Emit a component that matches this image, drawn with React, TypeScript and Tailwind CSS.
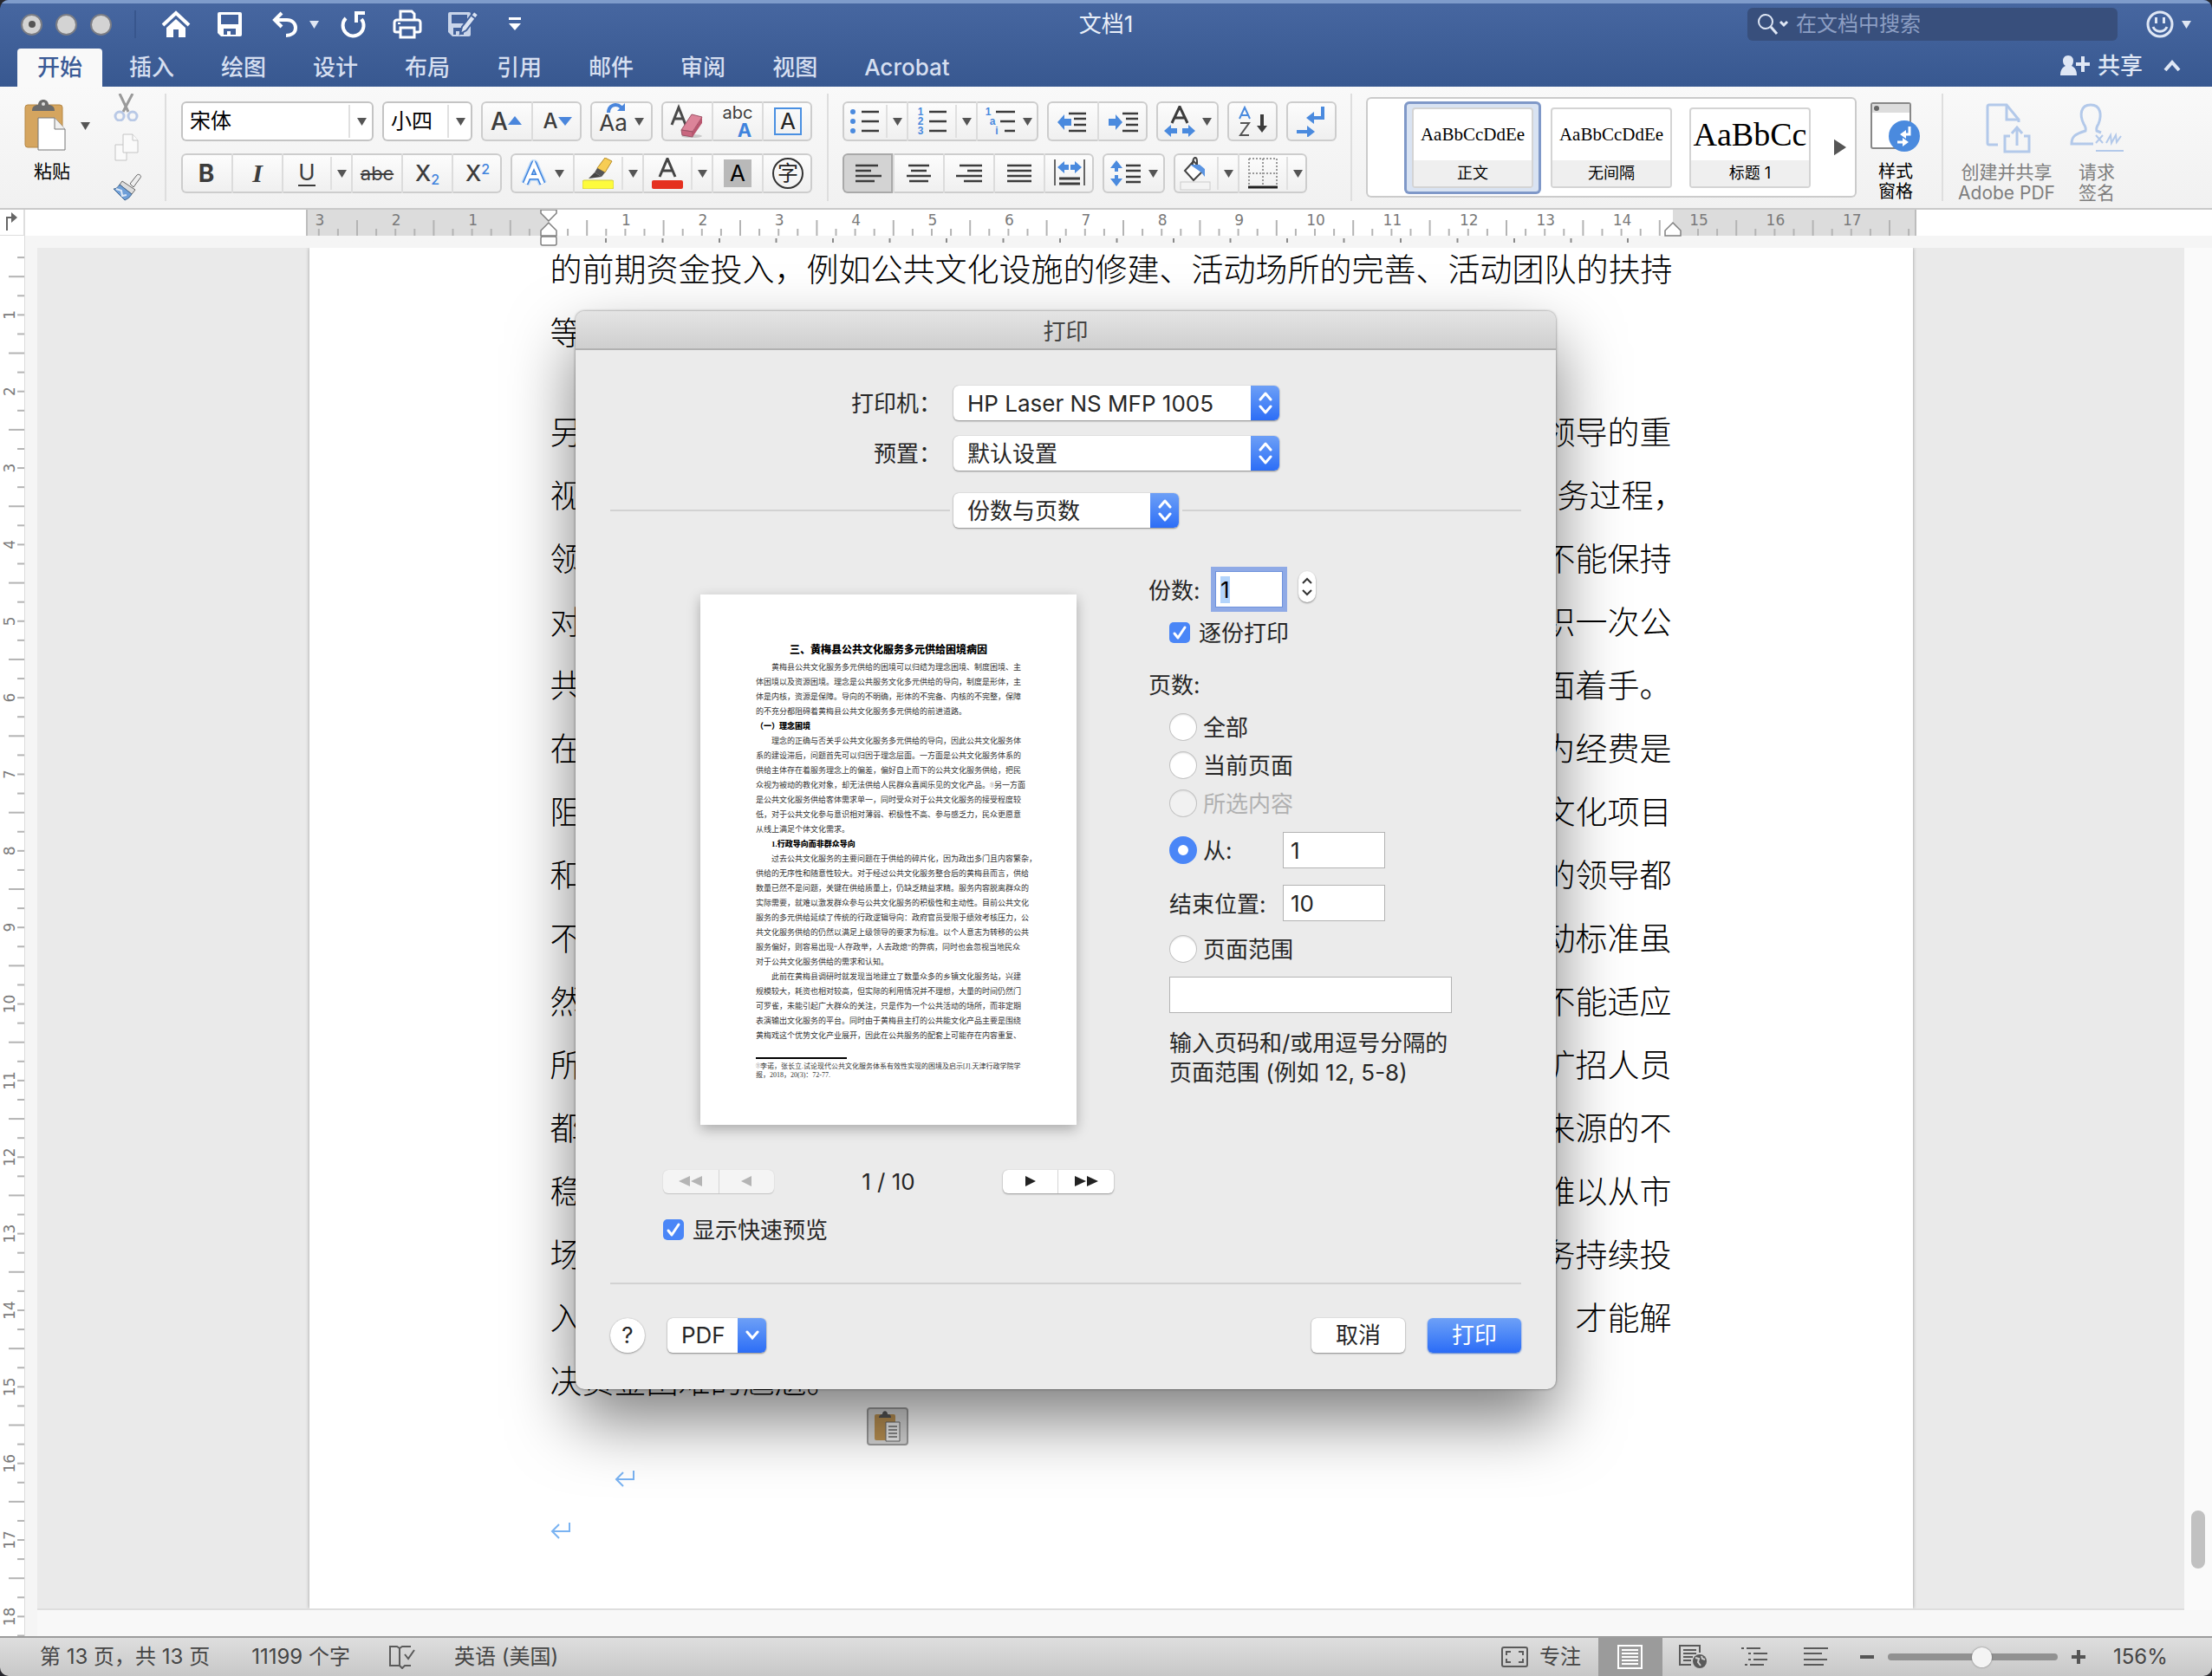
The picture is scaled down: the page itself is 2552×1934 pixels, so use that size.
import { useState } from 'react';
import type { ReactNode } from 'react';
import clsx from 'clsx';

const TABS = ['开始', '插入', '绘图', '设计', '布局', '引用', '邮件', '审阅', '视图', 'Acrobat'];

interface DocLine {
  head: string;
  tail?: string;
  /** closing punctuation hangs over the right margin */
  hanging?: boolean;
}

const BODY_LINES: DocLine[] = [
  { head: '另', tail: '领导的重' },
  { head: '视', tail: '业务过程，', hanging: true },
  { head: '领', tail: '不能保持' },
  { head: '对', tail: '织一次公' },
  { head: '共', tail: '面着手。' },
  { head: '在', tail: '为经费是' },
  { head: '阻', tail: '文化项目' },
  { head: '和', tail: '的领导都' },
  { head: '不', tail: '动标准虽' },
  { head: '然', tail: '不能适应' },
  { head: '所', tail: '扩招人员' },
  { head: '都', tail: '来源的不' },
  { head: '稳', tail: '难以从市' },
  { head: '场', tail: '务持续投' },
  { head: '入', tail: '才能解' },
  { head: '决资金困难的尴尬。' },
];

interface PreviewLine {
  text: string;
  kind?: 'indent' | 'heading' | 'subheading';
}

const PREVIEW_LINES: PreviewLine[] = [
  { text: '黄梅县公共文化服务多元供给的困境可以归结为理念困境、制度困境、主', kind: 'indent' },
  { text: '体困境以及资源困境。理念是公共服务文化多元供给的导向，制度是形体，主' },
  { text: '体是内核，资源是保障。导向的不明确，形体的不完备、内核的不完整，保障' },
  { text: '的不充分都阻碍着黄梅县公共文化服务多元供给的前进道路。' },
  { text: '（一）理念困境', kind: 'heading' },
  { text: '理念的正确与否关乎公共文化服务多元供给的导向，因此公共文化服务体', kind: 'indent' },
  { text: '系的建设滞后，问题首先可以归因于理念层面。一方面是公共文化服务体系的' },
  { text: '供给主体存在着服务理念上的偏差，偏好自上而下的公共文化服务供给，把民' },
  { text: '众视为被动的教化对象，却无法供给人民群众喜闻乐见的文化产品。①另一方面' },
  { text: '是公共文化服务供给客体需求单一，同时受众对于公共文化服务的接受程度较' },
  { text: '低，对于公共文化参与意识相对薄弱、积极性不高、参与感乏力，民众更愿意' },
  { text: '从线上满足个体文化需求。' },
  { text: '1.行政导向而非群众导向', kind: 'subheading' },
  { text: '过去公共文化服务的主要问题在于供给的碎片化，因为政出多门且内容繁杂，', kind: 'indent' },
  { text: '供给的无序性和随意性较大。对于经过公共文化服务整合后的黄梅县而言，供给' },
  { text: '数量已然不是问题，关键在供给质量上，仍缺乏精益求精。服务内容脱离群众的' },
  { text: '实际需要，就难以激发群众参与公共文化服务的积极性和主动性。目前公共文化' },
  { text: '服务的多元供给延续了传统的行政逻辑导向：政府官员受限于绩效考核压力，公' },
  { text: '共文化服务供给的仍然以满足上级领导的要求为标准。以个人意志为转移的公共' },
  { text: '服务偏好，则容易出现“人存政举，人去政熄”的弊病，同时也会忽视当地民众' },
  { text: '对于公共文化服务供给的需求和认知。' },
  { text: '此前在黄梅县调研时就发现当地建立了数量众多的乡镇文化服务站，兴建', kind: 'indent' },
  { text: '规模较大，耗资也相对较高，但实际的利用情况并不理想，大量的时间仍然门' },
  { text: '可罗雀，未能引起广大群众的关注，只是作为一个公共活动的场所，而非定期' },
  { text: '表演输出文化服务的平台。同时由于黄梅县主打的公共能文化产品主要是围绕' },
  { text: '黄梅戏这个优势文化产业展开，因此在公共服务的配套上可能存在内容重复、' },
];

/* ---------- small shared pieces ---------- */

function Caret({ className = 'text-[#555]' }: { className?: string }) {
  return (
    <svg className={clsx('h-[9px] w-[11px] shrink-0', className)} viewBox="0 0 11 9" fill="currentColor">
      <path d="M0 0h11L5.5 9z" />
    </svg>
  );
}

function Group({ children }: { children: ReactNode }) {
  return (
    <div className="flex h-[46px] shrink-0 overflow-hidden rounded-md bg-gradient-to-b from-[#fdfdfd] to-[#efefef] shadow-[inset_0_0_0_2px_#cdcdcd]">
      {children}
    </div>
  );
}

interface CellProps {
  label: string;
  width?: string;
  first?: boolean;
  active?: boolean;
  children: ReactNode;
}

function Cell({ label, width = 'w-[58px]', first, active, children }: CellProps) {
  return (
    <button
      type="button"
      aria-label={label}
      className={clsx(
        'flex h-full shrink-0 items-center justify-center gap-2 text-[#3c3c3c]',
        width,
        !first && 'border-l-2 border-[#dcdcdc]',
        active && 'rounded-l-md bg-[#d3d3d3] shadow-[inset_0_0_0_2px_#a9a9a9]',
      )}
    >
      {children}
    </button>
  );
}

function DropCell({ label, width = 'w-6' }: { label: string; width?: string }) {
  return (
    <button type="button" aria-label={label} className={clsx('flex h-full shrink-0 items-center py-1', width)}>
      <span className="flex h-full w-full items-center justify-center border-l-2 border-[#e0e0e0]">
        <Caret />
      </span>
    </button>
  );
}

function Divider() {
  return <div className="mt-2 h-[124px] w-0.5 shrink-0 bg-[#dedede]" />;
}

/* ---------- title bar ---------- */

function TitleBar() {
  return (
    <div className="grid h-[52px] grid-cols-[1fr_auto_1fr] items-center border-t-4 border-[#7f9ccb] text-white">
      <div className="flex items-center">
        <div className="ml-6 flex gap-[15px]">
          <span className="flex size-[25px] items-center justify-center rounded-full border-2 border-[#7b7d84] bg-[#d3d3d3]">
            <span className="size-2 rounded-full bg-[#555]" />
          </span>
          <span className="size-[25px] rounded-full border-2 border-[#7b7d84] bg-[#d3d3d3]" />
          <span className="size-[25px] rounded-full border-2 border-[#7b7d84] bg-[#d3d3d3]" />
        </div>
        <div className="ml-[26px] h-8 w-0.5 bg-[#38568d]" />
        <div className="ml-7 flex items-center">
          <button type="button" aria-label="主页">
            <svg className="h-8 w-9" viewBox="0 0 36 32" fill="none" stroke="#fff">
              <path d="M3 17L18 3l15 14" strokeWidth="4" />
              <path d="M7 20L18 10l11 10v11h-8v-9h-6v9H7z" fill="#fff" stroke="none" />
            </svg>
          </button>
          <button type="button" aria-label="保存" className="ml-7">
            <svg className="size-8" viewBox="0 0 32 32">
              <path d="M4 2h24a2 2 0 012 2v24a2 2 0 01-2 2H6l-4-4V4a2 2 0 012-2z" fill="#fff" />
              <path d="M6 5h20v11H6zM9 21h14v7h-6v-4h-4v4H9z" fill="#42619b" />
            </svg>
          </button>
          <button type="button" aria-label="撤消" className="ml-8 flex items-center gap-3">
            <svg className="h-8 w-8" viewBox="0 0 32 32" fill="none" stroke="#fff" strokeWidth="4">
              <path d="M12 3L4 11l8 8" />
              <path d="M4 11h14c6 0 10 4 10 9 0 6-5 9-11 9" />
            </svg>
            <Caret className="text-[#dfe6f3]" />
          </button>
          <button type="button" aria-label="重复" className="ml-6">
            <svg className="size-8" viewBox="0 0 32 32" fill="none" stroke="#fff" strokeWidth="4">
              <path d="M7 9a12 12 0 1018 1" />
              <path d="M29 3H19v11" />
            </svg>
          </button>
          <button type="button" aria-label="打印" className="ml-7">
            <svg className="h-9 w-9" viewBox="0 0 36 36" fill="none" stroke="#fff" strokeWidth="3">
              <path d="M10 13V3h13l3 3v7" />
              <path d="M9 27H5a2 2 0 01-2-2v-9a3 3 0 013-3h24a3 3 0 013 3v9a2 2 0 01-2 2h-4" />
              <path d="M10 22h16v11H10z" />
              <path d="M7 17h3" strokeWidth="2" />
            </svg>
          </button>
          <button type="button" aria-label="另存" className="ml-[26px]">
            <svg className="h-9 w-10" viewBox="0 0 40 36">
              <path d="M5 4h22a2 2 0 012 2v24a2 2 0 01-2 2H8l-5-5V6a2 2 0 012-2z" fill="#c9d5ea" />
              <path d="M7 7h18v10H7zM9 22h12v8h-5v-4h-4v4H9z" fill="#42619b" />
              <path d="M33 3l5 4-14 18-7 4 2-8z" fill="#dbe4f3" stroke="#42619b" strokeWidth="2" />
              <path d="M30 8l5 4" stroke="#42619b" strokeWidth="2" />
            </svg>
          </button>
          <button type="button" aria-label="自定义工具栏" className="ml-8">
            <svg className="h-4 w-4" viewBox="0 0 16 16" fill="#fff">
              <path d="M1 0h14v3H1zM1 7h14l-7 8z" />
            </svg>
          </button>
        </div>
      </div>
      <h1 className="text-[26px] leading-8 text-[#e8eef8]">文档1</h1>
      <div className="flex items-center justify-end pr-6">
        <div className="flex h-[38px] w-[427px] items-center rounded-md bg-[#384f7c] pl-3">
          <svg className="h-7 w-9 shrink-0" viewBox="0 0 36 28" fill="none" stroke="#dfe7f5" strokeWidth="2">
            <circle cx="9" cy="11" r="8" />
            <path d="M15 17l7 8" strokeWidth="3" />
            <path d="M26 11l4 4 4-4" strokeWidth="3" />
          </svg>
          <input
            type="search"
            aria-label="在文档中搜索"
            placeholder="在文档中搜索"
            className="ml-2 w-full bg-transparent text-2xl leading-8 outline-none placeholder:text-[#8c9ec3]"
          />
        </div>
        <button type="button" aria-label="反馈" className="ml-8 flex items-center gap-2">
          <svg className="size-[34px]" viewBox="0 0 34 34" fill="none" stroke="#dfe7f5" strokeWidth="3">
            <circle cx="17" cy="17" r="14" />
            <path d="M12.500 9v7M21.500 9v7" />
            <path d="M9 20c3 7 13 7 16 0" />
          </svg>
          <Caret className="text-[#dfe6f3]" />
        </button>
      </div>
    </div>
  );
}

function TabBar() {
  const [tab, setTab] = useState('开始');
  return (
    <div className="flex h-12 items-end justify-between">
      <nav className="ml-5 flex gap-2">
        {TABS.map((t) => (
          <button
            key={t}
            type="button"
            onClick={() => setTab(t)}
            className={clsx(
              'h-11 rounded-t px-[23px] text-[26px] leading-[42px] font-medium',
              t === tab ? 'bg-[#f9f9f9] text-[#3a5a96]' : 'text-[#d6dff0]',
            )}
          >
            {t}
          </button>
        ))}
      </nav>
      <div className="flex h-11 items-center pr-9 pb-1 text-[#dfe7f5]">
        <button type="button" className="flex items-center gap-2 text-[26px] leading-8 font-medium">
          <svg className="h-7 w-9" viewBox="0 0 36 28" fill="currentColor">
            <path d="M10 2c4 0 6 3 6 6s-1 5-2 6c4 2 6 5 6 11H1c0-6 2-9 6-11-2-1-3-3-3-6s2-6 6-6z" />
            <path d="M25 3h4v7h6v4h-6v7h-4v-7h-6v-4h6z" />
          </svg>
          共享
        </button>
        <button type="button" aria-label="折叠功能区" className="ml-6">
          <svg className="h-4 w-5" viewBox="0 0 20 16" fill="none" stroke="currentColor" strokeWidth="4">
            <path d="M2 13l8-9 8 9" />
          </svg>
        </button>
      </div>
    </div>
  );
}

/* ---------- ribbon ---------- */

function ClipboardSection() {
  return (
    <div className="flex w-[190px] shrink-0 pl-[27px]">
      <div className="w-[66px] pt-[14px]">
        <button type="button" className="flex flex-col gap-2.5 text-[21px] leading-7 text-black">
          <svg className="h-[60px] w-[50px]" viewBox="0 0 48 60">
            <rect x="1" y="7" width="43" height="49" rx="3" fill="#d5a55f" stroke="#b58745" />
            <path d="M9 14c0-5 3-7 7-7 0-4 3-6 6-6s6 2 6 6c4 0 7 2 7 7z" fill="#6b6b6b" />
            <circle cx="22" cy="6" r="2" fill="#ddd" />
            <path d="M16 22h19l12 13v24H16z" fill="#fff" stroke="#777" />
            <path d="M35 22v13h12" fill="#f0f0f0" stroke="#777" />
          </svg>
          <span className="pl-3 whitespace-nowrap">粘贴</span>
        </button>
      </div>
      <button type="button" aria-label="粘贴选项" className="h-[90px]">
        <Caret />
      </button>
      <div className="ml-6 flex flex-col items-center pt-2">
        <button type="button" aria-label="剪切">
          <svg className="h-8 w-8" viewBox="0 0 32 32" fill="none">
            <path d="M8 0l10 21M23 0L12 21" stroke="#9a9a9a" strokeWidth="3" />
            <circle cx="8" cy="26" r="5" stroke="#b9c9e6" strokeWidth="3" />
            <circle cx="23" cy="26" r="5" stroke="#b9c9e6" strokeWidth="3" />
          </svg>
        </button>
        <button type="button" aria-label="复制" className="mt-[14px]">
          <svg className="h-8 w-8" viewBox="0 0 32 32" fill="#fafafa" stroke="#c4c4c4">
            <path d="M3 13h13v18H3z" />
            <path d="M12 1h11l6 7v14H12z" />
            <path d="M23 1v7h6" />
          </svg>
        </button>
        <button type="button" aria-label="格式刷" className="mt-[14px]">
          <svg className="h-8 w-9" viewBox="0 0 36 32">
            <path d="M22 12L30 2c2-2 6 1 4 3l-8 11z" fill="#eee" stroke="#666" />
            <path d="M13 9l15 10-4 5L10 13z" fill="#ddd" stroke="#666" />
            <path d="M10 13l14 11c-2 4-6 6-8 7L3 18c3 0 5-2 7-5z" fill="#6f9fd8" stroke="#44688f" />
            <path d="M6 18l6 2 1 6 5-1" stroke="#dfeaf7" strokeWidth="2" fill="none" />
          </svg>
        </button>
      </div>
    </div>
  );
}

function ComboBox({ label, value, width }: { label: string; value: string; width: string }) {
  return (
    <div
      className={clsx(
        'flex h-[46px] shrink-0 rounded-md bg-white pl-2.5 shadow-[inset_0_0_0_2px_#c4c4c4]',
        width,
      )}
    >
      <input
        aria-label={label}
        defaultValue={value}
        className="w-full min-w-0 bg-transparent text-2xl leading-8 text-black outline-none"
      />
      <DropCell label={`${label}列表`} width="w-[28px] shrink-0 mr-px" />
    </div>
  );
}

function FontSection() {
  return (
    <div className="mx-[17px] mt-[17px] flex shrink-0 flex-col gap-[14px]">
      <div className="flex gap-2.5">
        <ComboBox label="字体" value="宋体" width="w-[222px]" />
        <ComboBox label="字号" value="小四" width="w-[104px]" />
        <Group>
          <Cell label="增大字号" first>
            <span className="text-[28px] leading-8 font-medium">A</span>
            <svg className="-ml-2 h-3 w-4" viewBox="0 0 16 12" fill="#4a86dc">
              <path d="M0 10L8 0l8 10z" />
            </svg>
          </Cell>
          <Cell label="减小字号">
            <span className="text-2xl leading-8 font-medium">A</span>
            <svg className="-ml-2 h-3 w-4" viewBox="0 0 16 12" fill="#4a86dc">
              <path d="M0 1l8 10 8-10z" />
            </svg>
          </Cell>
        </Group>
        <Group>
          <Cell label="更改大小写" width="w-[72px]" first>
            <span className="relative pt-1 text-[26px] leading-8">
              Aa
              <svg className="absolute -top-1 left-2 h-3.5 w-6" viewBox="0 0 24 14" fill="none">
                <path d="M3 12C3 4 11 0 18 6" stroke="#4a86dc" strokeWidth="4" />
                <path d="M13 10h9V1z" fill="#4a86dc" />
              </svg>
            </span>
            <Caret />
          </Cell>
        </Group>
        <Group>
          <Cell label="清除格式" first>
            <svg className="size-10" viewBox="0 0 40 40">
              <path d="M3 24L11 4l8 20M6 17h10" fill="none" stroke="#4a4a4a" strokeWidth="3" />
              <ellipse cx="26" cy="37" rx="12" ry="2" fill="#c9c9c9" />
              <path d="M26 12l12 3-11 17-13-2z" fill="#dc8499" stroke="#9c5266" />
              <path d="M14 30l13 2v6l-12-2z" fill="#c9677f" stroke="#9c5266" />
              <path d="M38 15v7L27 38v-6z" fill="#b9566f" />
            </svg>
          </Cell>
          <Cell label="拼音指南">
            <span className="flex flex-col text-xl leading-5">
              <span>abc</span>
              <span className="pl-4 text-[22px] font-bold text-[#3f83dd]">A</span>
            </span>
          </Cell>
          <Cell label="字符边框">
            <span className="flex h-8 w-8 items-center justify-center border-2 border-[#4a90e2] text-[26px] leading-8 text-[#222]">
              A
            </span>
          </Cell>
        </Group>
      </div>
      <div className="flex gap-2.5">
        <Group>
          <Cell label="加粗" first>
            <span className="text-[28px] leading-8 font-bold">B</span>
          </Cell>
          <Cell label="倾斜">
            <span className="font-['Liberation_Serif',serif] text-[30px] leading-8 font-bold italic">I</span>
          </Cell>
          <Cell label="下划线" width="w-[56px]">
            <span className="border-b-2 border-[#3c3c3c] text-[26px] leading-7">U</span>
          </Cell>
          <DropCell label="下划线选项" />
          <Cell label="删除线">
            <span className="text-[22px] leading-8 line-through decoration-2">abc</span>
          </Cell>
          <Cell label="下标">
            <span className="text-[26px] leading-8 font-medium">
              X<sub className="text-base text-[#3f83dd]">2</sub>
            </span>
          </Cell>
          <Cell label="上标">
            <span className="text-[26px] leading-8 font-medium">
              X<sup className="text-base text-[#3f83dd]">2</sup>
            </span>
          </Cell>
        </Group>
        <Group>
          <Cell label="文本效果" width="w-[72px]" first>
            <svg className="h-9 w-8" viewBox="0 0 32 36" fill="none">
              <path d="M6 30L16 7l10 23M10 22h12" stroke="#bcd9f8" strokeWidth="10" strokeLinejoin="round" />
              <path d="M6 30L16 7l10 23M10 22h12" stroke="#3f83dd" strokeWidth="7" strokeLinejoin="round" />
              <path d="M6 30L16 7l10 23M10 22h12" stroke="#fff" strokeWidth="4" />
            </svg>
            <Caret />
          </Cell>
          <Cell label="突出显示" width="w-[56px]">
            <svg className="h-9 w-9" viewBox="0 0 36 36">
              <path d="M17 12L26 0l8 4-8 13z" fill="#f7cd55" stroke="#b58d2b" />
              <path d="M17 12l9 5-4 5-8-5z" fill="#555" />
              <path d="M14 17l8 5-15 2z" fill="#444" />
              <rect x="0" y="26" width="36" height="10" rx="2" fill="#fdfb3c" stroke="#cfcb3c" />
            </svg>
          </Cell>
          <DropCell label="突出显示颜色" />
          <Cell label="字体颜色" width="w-[56px]">
            <svg className="h-9 w-9" viewBox="0 0 36 36">
              <path d="M9 22L18 1l9 21M12 15h12" fill="none" stroke="#444" strokeWidth="3" />
              <rect x="0" y="26" width="36" height="10" rx="2" fill="#e5301f" />
            </svg>
          </Cell>
          <DropCell label="字体颜色选项" />
          <Cell label="字符底纹">
            <span className="flex h-8 w-8 items-center justify-center bg-[#b9b9b9] text-[26px] leading-8 text-black">
              A
            </span>
          </Cell>
          <Cell label="带圈字符">
            <span className="flex size-9 items-center justify-center rounded-full border-2 border-[#333] text-2xl leading-8 text-[#222]">
              字
            </span>
          </Cell>
        </Group>
      </div>
    </div>
  );
}

function LinesIcon({ rows }: { rows: [number, number][] }) {
  return (
    <svg className="h-9 w-9" viewBox="0 0 36 36" stroke="#3c3c3c" strokeWidth="2.500">
      {rows.map(([x1, x2], i) => (
        <path key={i} d={`M${x1} ${9 + i * 6}H${x2}`} />
      ))}
    </svg>
  );
}

function ListIcon({ marks, dots, indent }: { marks?: string[]; dots?: boolean; indent?: boolean }) {
  return (
    <svg className="h-9 w-9 shrink-0" viewBox="0 0 36 36">
      {[7, 18, 29].map((y, i) => (
        <g key={y}>
          {dots && <circle cx="5" cy={y} r="3" fill="#4a8ade" />}
          {marks && (
            <text
              x={indent ? 4 + i * 5 : 5}
              y={y + 4}
              textAnchor="middle"
              fontSize="12"
              fontWeight="700"
              fill="#4a8ade"
              fontFamily="Liberation Sans, sans-serif"
            >
              {marks[i]}
            </text>
          )}
          <path d={`M${indent ? 13 + i * 5 : 15} ${y}H35`} stroke="#3c3c3c" strokeWidth="2.500" />
        </g>
      ))}
    </svg>
  );
}

function IndentIcon({ right }: { right?: boolean }) {
  return (
    <svg className="h-9 w-9" viewBox="0 0 36 36">
      <path
        d={right ? 'M17 19L9 10v5H1v8h8v5z' : 'M1 19l8-9v5h8v8H9v5z'}
        fill="#4a8ade"
      />
      <path
        d={right ? 'M17 9h18M21 15h14M21 22h14M17 29h18' : 'M14 9h20M20 15h14M20 22h14M14 29h20'}
        stroke="#3c3c3c"
        strokeWidth="2.500"
      />
    </svg>
  );
}

function ParagraphSection() {
  return (
    <div className="mx-4 mt-[17px] flex shrink-0 flex-col gap-[14px]">
      <div className="flex gap-2.5">
        <Group>
          <Cell label="项目符号" width="w-[50px]" first>
            <ListIcon dots />
          </Cell>
          <DropCell label="项目符号选项" />
          <Cell label="编号" width="w-[56px]">
            <ListIcon marks={['1', '2', '3']} />
          </Cell>
          <DropCell label="编号选项" />
          <Cell label="多级列表" width="w-[72px]">
            <ListIcon marks={['1', 'a', 'i']} indent />
            <Caret />
          </Cell>
        </Group>
        <Group>
          <Cell label="减少缩进量" first>
            <IndentIcon />
          </Cell>
          <Cell label="增加缩进量">
            <IndentIcon right />
          </Cell>
        </Group>
        <Group>
          <Cell label="中文版式" width="w-[72px]" first>
            <svg className="h-9 w-9" viewBox="0 0 36 36">
              <path d="M9 20L18 1l9 19M12 14h12" fill="none" stroke="#3c3c3c" strokeWidth="3" />
              <path d="M0 29l8-7v4h7v6H8v4zM36 29l-8-7v4h-7v6h7v4z" fill="#4a8ade" />
            </svg>
            <Caret />
          </Cell>
        </Group>
        <Group>
          <Cell label="排序" first>
            <svg className="h-9 w-9" viewBox="0 0 36 36" fill="none">
              <path d="M3 15L9 2l6 13M5 11h8" stroke="#4a8ade" strokeWidth="2" />
              <path d="M4 20h10L4 34h10" stroke="#555" strokeWidth="2" />
              <path d="M29 10v18" stroke="#3c3c3c" strokeWidth="4" />
              <path d="M23 23h12l-6 8z" fill="#3c3c3c" />
            </svg>
          </Cell>
        </Group>
        <Group>
          <Cell label="显示编辑标记" first>
            <svg className="h-9 w-9" viewBox="0 0 36 36" fill="none">
              <path d="M31 1v13H20" stroke="#4a8ade" strokeWidth="4" />
              <path d="M12 14l9-7v14z" fill="#4a8ade" />
              <path d="M1 30h12" stroke="#4a8ade" strokeWidth="4" />
              <path d="M22 30l-9-7v14z" fill="#4a8ade" />
            </svg>
          </Cell>
        </Group>
      </div>
      <div className="flex gap-2.5">
        <Group>
          <Cell label="左对齐" first active>
            <LinesIcon rows={[[4, 30], [4, 22], [4, 34], [4, 26]]} />
          </Cell>
          <Cell label="居中">
            <LinesIcon rows={[[6, 30], [9, 27], [4, 32], [7, 29]]} />
          </Cell>
          <Cell label="右对齐">
            <LinesIcon rows={[[7, 33], [16, 33], [3, 33], [12, 33]]} />
          </Cell>
          <Cell label="两端对齐">
            <LinesIcon rows={[[4, 32], [4, 32], [4, 32], [4, 32]]} />
          </Cell>
          <Cell label="分散对齐">
            <svg className="h-9 w-9 shrink-0" viewBox="0 0 36 36">
              <path d="M1 2v30M35 2v30" stroke="#666" strokeWidth="2" />
              <path d="M4 11l8-7v4h5v6h-5v4zM32 11l-8-7v4h-5v6h5v4z" fill="#4a8ade" />
              <path d="M6 24h24M6 30h24" stroke="#3c3c3c" strokeWidth="3" />
            </svg>
          </Cell>
        </Group>
        <Group>
          <Cell label="行距" width="w-[72px]" first>
            <svg className="h-9 w-9 shrink-0" viewBox="0 0 36 36">
              <path d="M7 3l7 9H9v4H5v-4H0zM7 33l7-9H9v-4H5v4H0z" fill="#4a8ade" />
              <path d="M18 9h17M18 15h17M18 22h17M18 28h17" stroke="#3c3c3c" strokeWidth="2.500" />
            </svg>
            <Caret />
          </Cell>
        </Group>
        <Group>
          <Cell label="底纹" width="w-[50px]" first>
            <svg className="h-10 w-9" viewBox="0 0 36 40">
              <path d="M6 17L16 6l11 11-11 11z" fill="#fff" stroke="#444" strokeWidth="2" />
              <path d="M15 10c0-10 5-10 5-4v8" fill="none" stroke="#444" strokeWidth="2" />
              <path d="M12 10l13 9 4 5V15l-6-5z" fill="#5a94e2" />
              <rect x="1" y="30" width="34" height="9" fill="#f3f3f3" stroke="#ccc" />
            </svg>
          </Cell>
          <DropCell label="底纹选项" />
          <Cell label="边框" width="w-[56px]">
            <svg className="h-9 w-9" viewBox="0 0 36 36" fill="none">
              <path d="M2 1h32M2 18h32M2 1v32M18 1v32M34 1v32" stroke="#999" strokeWidth="2" strokeDasharray="2 2" />
              <path d="M1 34h34" stroke="#222" strokeWidth="3" />
            </svg>
          </Cell>
          <DropCell label="边框选项" />
        </Group>
      </div>
    </div>
  );
}

function StyleCard({ name, big, selected }: { name: string; big?: boolean; selected?: boolean }) {
  return (
    <button
      type="button"
      className={clsx(
        'flex h-[107px] w-[158px] shrink-0 items-center justify-center rounded-md',
        selected && 'bg-[#d9e3f2] shadow-[inset_0_0_0_3px_#7f98c8]',
      )}
    >
      <span className="flex h-[93px] w-[140px] flex-col overflow-hidden rounded border-2 border-[#d4d4d4] bg-white">
        <span
          className={clsx(
            "flex flex-1 items-center justify-center font-['Liberation_Serif',serif] whitespace-nowrap text-black",
            big ? 'text-[38px] leading-10' : 'text-[21px] leading-8',
          )}
        >
          {big ? 'AaBbCc' : 'AaBbCcDdEe'}
        </span>
        <span className="h-[30px] bg-[#efefef] text-lg leading-[30px] text-black">{name}</span>
      </span>
    </button>
  );
}

function StylesSection() {
  return (
    <div className="ml-4 flex shrink-0">
      <div className="mt-3 flex h-[116px] w-[566px] items-center gap-0.5 rounded-md bg-white pl-11 shadow-[inset_0_0_0_2px_#cbcbcb]">
        <StyleCard name="正文" selected />
        <StyleCard name="无间隔" />
        <StyleCard name="标题 1" big />
        <button type="button" aria-label="更多样式" className="ml-4">
          <svg className="h-5 w-[14px]" viewBox="0 0 12 16" fill="#555">
            <path d="M0 0l12 8-12 8z" />
          </svg>
        </button>
      </div>
      <button
        type="button"
        className="mr-2 flex w-[90px] flex-col items-center pt-[17px] text-xl leading-[23px] text-black"
      >
        <svg className="mb-2.5 h-[60px] w-[60px]" viewBox="0 0 60 60">
          <rect x="2" y="2" width="45" height="52" rx="2" fill="#fff" stroke="#888" strokeWidth="2" />
          <path d="M3 3h43v10H3z" fill="#ddd" />
          <circle cx="8" cy="8" r="3" fill="#666" />
          <circle cx="40" cy="40" r="18" fill="#4a8ade" />
          <path d="M46 29v9h-6M32 47h7" stroke="#fff" strokeWidth="3" fill="none" />
          <path d="M35 38l7-5v10zM45 47l-7-5v10z" fill="#fff" />
        </svg>
        <span>样式</span>
        <span>窗格</span>
      </button>
    </div>
  );
}

function AcrobatSection() {
  return (
    <div className="ml-4 flex shrink-0 gap-4 pt-[17px] text-[21px] leading-6 text-[#7e7e7e]">
      <button type="button" className="flex w-[114px] flex-col items-center">
        <svg className="mb-2.5 h-[60px] w-[60px]" viewBox="0 0 60 60" fill="none" stroke="#b3c9ea" strokeWidth="3">
          <path d="M20 50H10a2 2 0 01-2-2V6a2 2 0 012-2h20l14 17v3" />
          <path d="M30 4v17h14" />
          <path d="M34 40h-6v18h28V40h-6" />
          <path d="M42 51V30M36 37l6-7 6 7" />
        </svg>
        <span className="whitespace-nowrap">创建并共享</span>
        <span className="whitespace-nowrap">Adobe PDF</span>
      </button>
      <button type="button" className="flex w-[62px] flex-col items-center">
        <svg className="mb-2.5 h-[60px] w-[62px]" viewBox="0 0 62 60" fill="none" stroke="#b3c9ea" strokeWidth="3">
          <path d="M27 49H2c0-8 3-11 16-15 1-3 0-5-2-8-5-10-4-22 8-22s13 12 9 22c-2 3-3 5-2 8l5 2" />
          <path d="M30 39l8 9M38 39l-8 9M42 48l5-9 1 9 5-9 1 8 5-7M30 57h32" strokeWidth="2" />
        </svg>
        <span>请求</span>
        <span>签名</span>
      </button>
    </div>
  );
}

function Ribbon() {
  return (
    <div className="flex h-[142px] shrink-0 overflow-hidden border-b-2 border-[#c9c9c9] bg-gradient-to-b from-[#f9f9f9] to-[#f1f1f1]">
      <ClipboardSection />
      <Divider />
      <FontSection />
      <Divider />
      <ParagraphSection />
      <Divider />
      <StylesSection />
      <Divider />
      <AcrobatSection />
    </div>
  );
}

/* ---------- rulers ---------- */

const UNIT = 88.4;

function HorizontalRuler() {
  const quarters = Array.from({ length: 84 }, (_, i) => i - 12);
  return (
    <svg className="h-[45px] w-[1858px] shrink-0" viewBox="0 0 1858 45">
      <rect width="280" height="30" fill="#dcdcdc" />
      <rect x="1577" width="281" height="30" fill="#dcdcdc" />
      <path d="M1 0v30M1857 0v30" stroke="#bdbdbd" strokeWidth="2" />
      {quarters.map((q) => {
        const x = 280 + (q * UNIT) / 4;
        const half = Math.abs(q % 4) === 2;
        if (q === 0 || x > 1850) return null;
        return <path key={q} d={`M${x} ${half ? 12 : 22}V30`} stroke="#b4b4b4" strokeWidth="2" />;
      })}
      {Array.from({ length: 21 }, (_, i) => i - 3).map((n) =>
        n === 0 ? null : (
          <text
            key={n}
            x={281 + n * UNIT}
            y="18"
            textAnchor="middle"
            fontSize="17"
            fill="#7a7a7a"
            fontFamily="'DejaVu Sans', sans-serif"
          >
            {Math.abs(n)}
          </text>
        ),
      )}
      {Array.from({ length: 19 }, (_, i) => 346 + i * 65.5).map((x) => (
        <path key={x} d={`M${x} 33v5`} stroke="#8a8a8a" strokeWidth="2" />
      ))}
      <g fill="#fff" stroke="#808080" strokeWidth="1.500">
        <path d="M271 0h18v4l-9 9-9-9z" />
        <path d="M280 15l9 9v6h-18v-6z" />
        <rect x="271" y="31" width="18" height="10" rx="2" />
        <path d="M1577 15l9 9v6h-18v-6z" />
      </g>
    </svg>
  );
}

function VerticalRuler() {
  const quarters = Array.from({ length: 73 }, (_, i) => i + 1);
  return (
    <svg className="h-full w-[29px]" preserveAspectRatio="xMinYMin slice" viewBox="0 0 29 1615">
      <path d="M29 0v1615" stroke="#dcdcdc" strokeWidth="2" />
      {quarters.map((q) => (
        <g key={q}>
          <path
            d={`M${q % 4 === 2 ? 10 : 20} ${3 + (q * 88.3) / 4}H28`}
            stroke="#b4b4b4"
            strokeWidth="2"
          />
          {q % 4 === 0 && (
            <text
              transform={`translate(17 ${3 + (q * 88.3) / 4}) rotate(-90)`}
              textAnchor="middle"
              fontSize="17"
              fill="#7a7a7a"
              fontFamily="'DejaVu Sans', sans-serif"
            >
              {q / 4}
            </text>
          )}
        </g>
      ))}
    </svg>
  );
}

/* ---------- document ---------- */

function ReturnMark() {
  return (
    <svg className="h-5 w-6" viewBox="0 0 24 20" fill="none" stroke="#7ab3f2" strokeWidth="2">
      <path d="M22 1v10H3M10 3l-8 8 8 8" />
    </svg>
  );
}

function DocumentPage() {
  return (
    <article className="h-full w-[1850px] max-w-full shrink-0 overflow-hidden bg-white px-[278px] font-['Liberation_Serif','Noto_Sans_CJK_SC',serif] text-[37px] leading-[73px] font-light text-black shadow-[0_0_4px_#999]">
      <p className="-mt-2.5 whitespace-nowrap">
        的前期资金投入，例如公共文化设施的修建、活动场所的完善、活动团队的扶持
      </p>
      <p>等</p>
      <div className="mt-[42px]">
        {BODY_LINES.map((line) => (
          <p key={line.head} className="flex justify-between whitespace-nowrap">
            <span>{line.head}</span>
            {line.tail && <span className={clsx(line.hanging && '-mr-4')}>{line.tail}</span>}
          </p>
        ))}
      </div>
      <div className="-mt-2 ml-[365px]">
        <button
          type="button"
          aria-label="粘贴选项"
          className="flex h-11 w-12 items-center justify-center rounded border-2 border-[#9c9c9c] bg-[#d6d6d6]"
        >
          <svg className="h-9 w-8" viewBox="0 0 32 36">
            <rect x="1" y="4" width="24" height="30" rx="2" fill="#b99052" />
            <path d="M6 8c0-3 2-4 4-4 0-5 6-5 6 0 3 0 4 1 4 4z" fill="#555" />
            <path d="M14 13h16v22H14z" fill="#eee" stroke="#666" />
            <path d="M17 18h10M17 22h10M17 26h10M17 30h10" stroke="#8a8a8a" strokeWidth="2" />
          </svg>
        </button>
      </div>
      <div className="mt-7 ml-[74px]">
        <ReturnMark />
      </div>
      <div className="mt-10">
        <ReturnMark />
      </div>
    </article>
  );
}

function Workspace() {
  return (
    <div className="flex min-h-0 flex-1 flex-col bg-[#f5f5f5]">
      <div className="flex h-11 shrink-0">
        <div className="h-[31px] w-[29px] border-r-2 border-b-2 border-[#dedede] bg-white">
          <svg className="h-7 w-6" viewBox="0 0 24 28" fill="none" stroke="#666" strokeWidth="2">
            <path d="M8 24V9h7" />
            <path d="M13 3l7 6-7 6z" fill="#666" stroke="none" />
          </svg>
        </div>
        <div className="flex min-w-0 flex-1 justify-center bg-gradient-to-b from-white from-[68%] to-[#f5f5f5] to-[68%] pr-8 pl-[14px]">
          <HorizontalRuler />
        </div>
      </div>
      <div className="flex min-h-0 flex-1">
        <div className="-mt-3.5 w-[29px] shrink-0 overflow-hidden bg-white">
          <VerticalRuler />
        </div>
        <div className="ml-[14px] flex min-w-0 flex-1 flex-col">
          <div className="flex min-h-0 flex-1">
            <main className="flex min-w-0 flex-1 justify-center overflow-hidden border-b-2 border-[#dedede] bg-[#eaeaea]">
              <DocumentPage />
            </main>
            <div className="flex w-8 shrink-0 flex-col items-center justify-end bg-[#fafafa] pb-12">
              <div className="h-[67px] w-4 rounded-full bg-[#c1c1c1]" />
            </div>
          </div>
          <div className="h-[30px] shrink-0 bg-[#f8f8f8]" />
        </div>
      </div>
    </div>
  );
}

/* ---------- status bar ---------- */

function StatusBar() {
  return (
    <footer className="flex h-[46px] shrink-0 items-center border-t-2 border-[#9c9c9c] bg-gradient-to-b from-[#dedede] to-[#c8c8c8] text-2xl leading-8 text-[#454545]">
      <span className="ml-[46px]">第 13 页，共 13 页</span>
      <span className="ml-12">11199 个字</span>
      <button type="button" aria-label="校对" className="ml-11">
        <svg className="h-7 w-8" viewBox="0 0 32 28" fill="none" stroke="#5a5a5a" strokeWidth="2">
          <path d="M13 24H2V2h8l3 2v20l3 3 3-3h7" />
          <path d="M13 4l3-2h10M19 11l4 5 7-10" />
        </svg>
      </button>
      <span className="ml-11">英语 (美国)</span>
      <div className="ml-auto flex h-full items-center">
        <button type="button" className="flex items-center gap-3">
          <svg className="h-6 w-8" viewBox="0 0 32 24" fill="none" stroke="#5a5a5a" strokeWidth="2">
            <rect x="1" y="1" width="29" height="22" rx="2" />
            <path d="M6 10V6h5M20 6h5v4M25 14v4h-5M11 18H6v-4" />
          </svg>
          专注
        </button>
        <button type="button" aria-label="页面视图" className="ml-5 flex h-full w-[74px] items-center justify-center bg-[#9b9b9b]">
          <svg className="h-7 w-8" viewBox="0 0 32 28" fill="none" stroke="#fff" strokeWidth="2">
            <rect x="2" y="1" width="27" height="26" />
            <path d="M6 6h19M6 10h19M6 14h19M6 18h19M6 22h19" />
          </svg>
        </button>
        <button type="button" aria-label="Web 版式" className="ml-[18px]">
          <svg className="h-7 w-9" viewBox="0 0 36 28" fill="none" stroke="#5a5a5a" strokeWidth="2">
            <path d="M15 23H2V1h23v8" />
            <path d="M6 6h15M6 10h15M6 14h11M6 18h9" />
            <circle cx="25" cy="19" r="8" fill="#5a5a5a" stroke="none" />
            <path d="M20 15l4 1-1 4 3 4M27 13l1 3 3 1" stroke="#d0d0d0" />
          </svg>
        </button>
        <button type="button" aria-label="大纲" className="ml-9">
          <svg className="h-6 w-8" viewBox="0 0 32 24" fill="none" stroke="#5a5a5a" strokeWidth="2">
            <path d="M1 2h3M7 2h16M9 8h3M15 8h16M9 15h3M15 15h16M5 21h3M11 21h16" />
          </svg>
        </button>
        <button type="button" aria-label="草稿" className="ml-10">
          <svg className="h-6 w-8" viewBox="0 0 32 24" fill="none" stroke="#5a5a5a" strokeWidth="2">
            <path d="M1 2h28M1 8h21M1 15h27M1 21h23" />
          </svg>
        </button>
        <button type="button" aria-label="缩小" className="ml-[34px]">
          <svg className="h-4 w-4" viewBox="0 0 16 16" stroke="#555" strokeWidth="4">
            <path d="M0 8h16" />
          </svg>
        </button>
        <input
          type="range"
          aria-label="缩放"
          min={0}
          max={100}
          defaultValue={56}
          className="ml-4 h-2 w-[196px] appearance-none rounded-full bg-[#919191] [&::-webkit-slider-thumb]:size-[23px] [&::-webkit-slider-thumb]:appearance-none [&::-webkit-slider-thumb]:rounded-full [&::-webkit-slider-thumb]:bg-[#f4f4f4] [&::-webkit-slider-thumb]:shadow-[0_0_2px_#666]"
        />
        <button type="button" aria-label="放大" className="ml-4">
          <svg className="h-4 w-4" viewBox="0 0 16 16" stroke="#555" strokeWidth="4">
            <path d="M0 8h16M8 0v16" />
          </svg>
        </button>
        <span className="ml-8 w-[114px]">156%</span>
      </div>
    </footer>
  );
}

/* ---------- print dialog ---------- */

interface PopupProps {
  id?: string;
  label?: string;
  options: string[];
  width: string;
}

function Popup({ id, label, options, width }: PopupProps) {
  return (
    <div
      className={clsx(
        'grid h-10 shrink-0 overflow-hidden rounded-md bg-white shadow-[0_1px_2px_#8a8a8a,0_0_1px_#999]',
        width,
      )}
    >
      <select
        id={id}
        aria-label={label}
        className="col-start-1 row-start-1 h-full w-full appearance-none bg-transparent pt-0.5 pl-4 text-[26px] leading-8 text-[#262626] outline-none"
      >
        {options.map((o) => (
          <option key={o}>{o}</option>
        ))}
      </select>
      <span className="pointer-events-none col-start-1 row-start-1 flex w-[33px] items-center justify-center justify-self-end bg-gradient-to-b from-[#6d9ff6] to-[#2c6df6]">
        <svg className="h-[26px] w-4" viewBox="0 0 16 26" fill="none" stroke="#fff" strokeWidth="3" strokeLinecap="round" strokeLinejoin="round">
          <path d="M2 9l6-7 6 7M2 17l6 7 6-7" />
        </svg>
      </span>
    </div>
  );
}

function CheckBox({ label }: { label: string }) {
  const [checked, setChecked] = useState(true);
  return (
    <label className="flex h-[34px] items-center gap-2.5">
      <span className="grid size-6 shrink-0">
        <input
          type="checkbox"
          checked={checked}
          onChange={(e) => setChecked(e.target.checked)}
          className="col-start-1 row-start-1 size-6 appearance-none rounded-[5px] bg-white checked:bg-[#4a86f7]"
        />
        <svg
          className="pointer-events-none col-start-1 row-start-1 size-6"
          viewBox="0 0 24 24"
          fill="none"
          stroke="#fff"
          strokeWidth="3"
          strokeLinecap="round"
          strokeLinejoin="round"
        >
          {checked && <path d="M6 13l4 5 8-12" />}
        </svg>
      </span>
      <span className="pt-0.5">{label}</span>
    </label>
  );
}

interface RadioProps {
  label: string;
  value: string;
  current: string;
  disabled?: boolean;
  onSelect: (value: string) => void;
}

function Radio({ label, value, current, disabled, onSelect }: RadioProps) {
  return (
    <label className={clsx('flex h-11 items-center gap-[7px]', disabled && 'text-[#b1b1b1]')}>
      <input
        type="radio"
        name="pages"
        checked={current === value}
        disabled={disabled}
        onChange={() => onSelect(value)}
        className="size-8 shrink-0 appearance-none rounded-full bg-white shadow-[inset_0_0_0_1px_#c2c2c2,inset_0_2px_2px_#dcdcdc] checked:border-[10px] checked:border-[#4a86f7] checked:shadow-none disabled:bg-[#f1f1f1]"
      />
      <span className="pt-0.5">{label}</span>
    </label>
  );
}

function PreviewText({ text }: { text: string }) {
  const [before, after] = text.split('①');
  if (after === undefined) return <>{text}</>;
  return (
    <>
      {before}
      <sup className="text-[5px]">①</sup>
      {after}
    </>
  );
}

function PreviewSheet() {
  return (
    <div className="mx-auto h-[612px] w-[434px] overflow-hidden bg-white pt-14 pl-16 font-['Liberation_Serif','Noto_Sans_CJK_SC',serif] text-[9px] leading-[17px] whitespace-nowrap text-[#333] shadow-[0_5px_14px_rgba(0,0,0,0.28)]">
      <h3 className="pr-16 text-center text-xs leading-4 font-black text-black">三、黄梅县公共文化服务多元供给困境病因</h3>
      <div className="mt-1">
        {PREVIEW_LINES.map((line) => (
          <p
            key={line.text}
            className={clsx(
              'h-[17px]',
              (line.kind === 'indent' || line.kind === 'subheading') && 'pl-[18px]',
              (line.kind === 'heading' || line.kind === 'subheading') && 'font-black text-black',
            )}
          >
            <PreviewText text={line.text} />
          </p>
        ))}
      </div>
      <div className="mt-4 h-0.5 w-[105px] bg-black" />
      <p className="mt-1 text-[8px] leading-[10px]">
        <PreviewText text="①李诺，张长立.试论现代公共文化服务体系有效性实现的困境及启示[J].天津行政学院学" />
        <br />
        报，2018，20(3)：72-77.
      </p>
    </div>
  );
}

function StepButtons({ disabled, children }: { disabled?: boolean; children: ReactNode }) {
  return (
    <div
      className={clsx(
        'flex h-[27px] w-32 divide-x divide-[#d5d5d5] rounded-md',
        disabled
          ? 'bg-[#f4f4f4] text-[#b4b4b4] shadow-[0_1px_1px_#c4c4c4,0_0_1px_#c4c4c4]'
          : 'bg-white text-[#222] shadow-[0_1px_2px_#999,0_0_1px_#aaa]',
      )}
    >
      {children}
    </div>
  );
}

function PrintDialog() {
  const [mode, setMode] = useState('from');
  return (
    <section
      role="dialog"
      aria-label="打印"
      className="absolute top-[359px] left-[664px] w-[1131px] overflow-hidden rounded-[10px] bg-[#ebebeb] text-[26px] leading-8 text-[#262626] shadow-[0_36px_76px_rgba(0,0,0,0.5),0_0_3px_rgba(0,0,0,0.5)]"
    >
      <h2 className="h-[45px] border-b-2 border-[#b1b1b1] bg-gradient-to-b from-[#e4e4e4] to-[#cfcfcf] text-center leading-[47px] text-[#444]">
        打印
      </h2>
      <div className="px-10 pt-[41px] pb-[42px]">
        <div className="grid grid-cols-[382px_auto] items-center gap-x-[14px] gap-y-[18px]">
          <label htmlFor="printer" className="pt-0.5 text-right">
            打印机：
          </label>
          <Popup id="printer" options={['HP Laser NS MFP 1005']} width="w-[376px]" />
          <label htmlFor="preset" className="pt-0.5 text-right">
            预置：
          </label>
          <Popup id="preset" options={['默认设置']} width="w-[376px]" />
        </div>
        <div className="mt-[26px] flex items-center gap-1">
          <div className="h-0.5 w-[392px] bg-[#d2d2d2]" />
          <Popup label="选项" options={['份数与页数']} width="w-[260px]" />
          <div className="h-0.5 flex-1 bg-[#d2d2d2]" />
        </div>

        <div className="flex">
          <div className="mt-[77px] ml-[61px] w-[520px]">
            <PreviewSheet />
            <div className="mt-12 flex items-center justify-between">
              <StepButtons disabled>
                <button type="button" aria-label="第一页" disabled className="flex flex-1 items-center justify-center">
                  <svg className="h-3 w-7" viewBox="0 0 28 12" fill="currentColor">
                    <path d="M0 6l13-6v12zM14 6l13-6v12z" />
                  </svg>
                </button>
                <button type="button" aria-label="上一页" disabled className="flex flex-1 items-center justify-center">
                  <svg className="h-3 w-3" viewBox="0 0 12 12" fill="currentColor">
                    <path d="M0 6l12-6v12z" />
                  </svg>
                </button>
              </StepButtons>
              <span className="pt-0.5">1 / 10</span>
              <StepButtons>
                <button type="button" aria-label="下一页" className="flex flex-1 items-center justify-center">
                  <svg className="h-3 w-3" viewBox="0 0 12 12" fill="currentColor">
                    <path d="M12 6L0 0v12z" />
                  </svg>
                </button>
                <button type="button" aria-label="最后一页" className="flex flex-1 items-center justify-center">
                  <svg className="h-3 w-7" viewBox="0 0 28 12" fill="currentColor">
                    <path d="M14 6L1 0v12zM28 6L15 0v12z" />
                  </svg>
                </button>
              </StepButtons>
            </div>
            <div className="mt-[22px]">
              <CheckBox label="显示快速预览" />
            </div>
          </div>

          <div className="ml-10 pt-[44px]">
            <div className="flex h-[54px] items-center">
              <label htmlFor="copies" className="w-[77px] pt-1">
                份数:
              </label>
              <input
                id="copies"
                defaultValue="1"
                autoFocus
                onFocus={(e) => e.target.select()}
                className="h-[42px] w-[78px] bg-white px-1.5 outline-none shadow-[0_0_0_5px_#8faae6,inset_0_0_0_1px_#6f92dc] selection:bg-[#b3d4fb] selection:text-black"
              />
              <button
                type="button"
                aria-label="调整份数"
                className="mb-1.5 ml-[18px] flex h-9 w-5 items-center justify-center rounded-[10px] bg-white shadow-[0_1px_2px_#888]"
              >
                <svg className="h-6 w-3" viewBox="0 0 12 24" fill="none" stroke="#333" strokeWidth="2">
                  <path d="M1 8l5-5 5 5M1 16l5 5 5-5" />
                </svg>
              </button>
            </div>
            <div className="mt-1.5 ml-6">
              <CheckBox label="逐份打印" />
            </div>
            <p className="mt-7">页数:</p>
            <div className="mt-2.5 ml-6 w-[326px]">
              <Radio label="全部" value="all" current={mode} onSelect={setMode} />
              <Radio label="当前页面" value="current" current={mode} onSelect={setMode} />
              <Radio label="所选内容" value="selection" current={mode} onSelect={setMode} disabled />
              <div className="mt-2.5 grid grid-cols-[131px_118px] items-center gap-y-[18px]">
                <Radio label="从:" value="from" current={mode} onSelect={setMode} />
                <input aria-label="从" defaultValue="1" className="h-[42px] border border-[#b3b3b3] bg-white px-2 outline-none" />
                <label htmlFor="to" className="pt-1">
                  结束位置:
                </label>
                <input id="to" defaultValue="10" className="h-[42px] border border-[#b3b3b3] bg-white px-2 outline-none" />
              </div>
              <div className="mt-2.5">
                <Radio label="页面范围" value="range" current={mode} onSelect={setMode} />
              </div>
              <input aria-label="页面范围" className="mt-2.5 h-[42px] w-full border border-[#b3b3b3] bg-white px-2 outline-none" />
              <p className="mt-[18px] leading-[34px] whitespace-nowrap">
                输入页码和/或用逗号分隔的
                <br />
                页面范围 (例如 12, 5-8)
              </p>
            </div>
          </div>
        </div>

        <div className="mt-11 h-0.5 bg-[#d2d2d2]" />
        <div className="mt-[39px] flex items-center">
          <button
            type="button"
            aria-label="帮助"
            className="size-10 rounded-full bg-white text-center shadow-[0_1px_2px_#999,0_0_1px_#aaa]"
          >
            ?
          </button>
          <button
            type="button"
            className="ml-[26px] flex h-10 w-[114px] items-center justify-between overflow-hidden rounded-md bg-white pl-4 shadow-[0_1px_2px_#8a8a8a,0_0_1px_#999]"
          >
            PDF
            <span className="flex h-full w-[33px] items-center justify-center bg-gradient-to-b from-[#6d9ff6] to-[#2c6df6]">
              <svg className="h-3 w-4" viewBox="0 0 16 12" fill="none" stroke="#fff" strokeWidth="3" strokeLinecap="round">
                <path d="M2 2l6 7 6-7" />
              </svg>
            </span>
          </button>
          <button
            type="button"
            className="ml-auto h-10 w-[108px] rounded-md bg-white shadow-[0_1px_2px_#8a8a8a,0_0_1px_#999]"
          >
            取消
          </button>
          <button
            type="button"
            className="ml-[26px] h-10 w-[108px] rounded-md bg-gradient-to-b from-[#6da0f7] to-[#2a6bf6] text-white shadow-[0_1px_2px_#4a77c8]"
          >
            打印
          </button>
        </div>
      </div>
    </section>
  );
}

export default function App() {
  return (
    <div className="relative flex h-screen flex-col overflow-hidden bg-[#26262c] font-['Inter','Noto_Sans_CJK_SC',sans-serif]">
      <div className="flex min-h-0 flex-1 flex-col overflow-hidden rounded-[10px]">
        <header className="shrink-0 bg-gradient-to-b from-[#4767a1] to-[#385890]">
          <TitleBar />
          <TabBar />
        </header>
        <Ribbon />
        <Workspace />
        <StatusBar />
      </div>
      <PrintDialog />
    </div>
  );
}
